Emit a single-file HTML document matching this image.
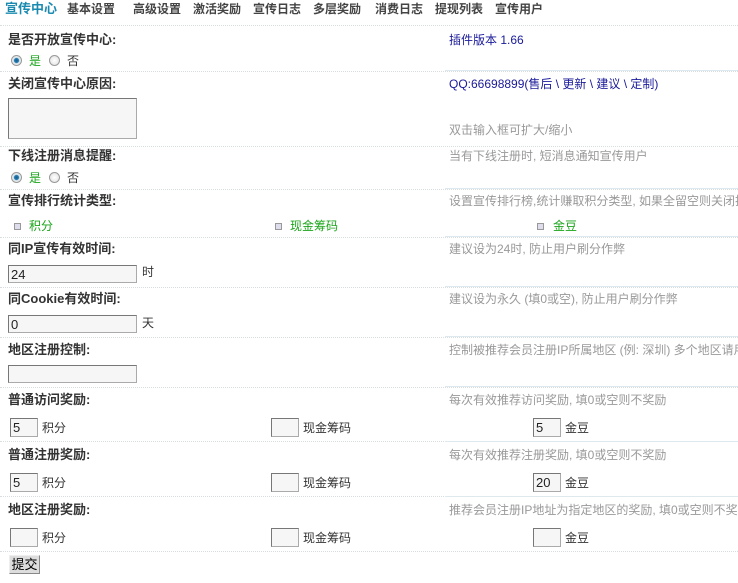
<!DOCTYPE html>
<html><head><meta charset="utf-8"><style>
*{margin:0;padding:0;box-sizing:border-box}
body{width:738px;height:583px;overflow:hidden;background:#fff;position:relative;font-family:"Liberation Sans","Noto Sans CJK SC","WenQuanYi Zen Hei",sans-serif;font-size:12px;color:#333}
.a{position:absolute;white-space:nowrap;line-height:14px}
.nav{font-weight:bold;color:#444;font-size:12px}
.lb{font-weight:bold;color:#333;font-size:13px;line-height:15px}
.n{color:#999}
.bl{color:#1a1a9a}
.g{color:#1aa51a}
.sep{position:absolute;left:0;width:738px;height:0;border-top:1px dotted #d8dde0}
.sepr{position:absolute;left:445px;width:293px;height:0;border-top:1px solid #dde9ef}
.in{position:absolute;background:#f6f6f6;border:1px solid #aaa;border-top-color:#777;border-left-color:#777;font-size:13px;padding:2px 0 0 2px;line-height:14px;color:#222}
.r{position:absolute;width:11px;height:11px;border-radius:50%;border:1px solid #999;background:radial-gradient(#fff,#ddd)}
.r.on{background:radial-gradient(#0d5e8e 0,#2a7cb0 35%,#cfe0ea 45%,#eee 70%)}
.cb{position:absolute;width:7px;height:7px;border:1px solid #999;background:#dde}
</style></head><body>
<div class="a nav" style="left:5px;top:2px;color:#1a8ab0;font-size:13px">宣传中心</div>
<div class="a nav" style="left:67px;top:2px">基本设置</div>
<div class="a nav" style="left:133px;top:2px">高级设置</div>
<div class="a nav" style="left:193px;top:2px">激活奖励</div>
<div class="a nav" style="left:253px;top:2px">宣传日志</div>
<div class="a nav" style="left:313px;top:2px">多层奖励</div>
<div class="a nav" style="left:375px;top:2px">消费日志</div>
<div class="a nav" style="left:435px;top:2px">提现列表</div>
<div class="a nav" style="left:495px;top:2px">宣传用户</div>
<div class="sep" style="top:25px"></div>

<div class="a lb" style="left:8px;top:32px">是否开放宣传中心:</div>
<div class="a bl" style="left:449px;top:33px">插件版本 1.66</div>
<div class="r on" style="left:11px;top:55px"></div><div class="a g" style="left:29px;top:54px">是</div>
<div class="r" style="left:49px;top:55px"></div><div class="a" style="left:67px;top:54px">否</div>
<div class="sep" style="top:71px"></div><div class="sepr" style="top:70px"></div>

<div class="a lb" style="left:8px;top:76px">关闭宣传中心原因:</div>
<div class="a bl" style="left:449px;top:77px">QQ:66698899(售后 \ 更新 \ 建议 \ 定制)</div>
<div class="in" style="left:8px;top:98px;width:129px;height:41px"></div>
<div class="a n" style="left:449px;top:123px">双击输入框可扩大/缩小</div>
<div class="sep" style="top:146px"></div>

<div class="a lb" style="left:8px;top:148px">下线注册消息提醒:</div>
<div class="a n" style="left:449px;top:149px">当有下线注册时, 短消息通知宣传用户</div>
<div class="r on" style="left:11px;top:172px"></div><div class="a g" style="left:29px;top:171px">是</div>
<div class="r" style="left:49px;top:172px"></div><div class="a" style="left:67px;top:171px">否</div>
<div class="sep" style="top:189px"></div><div class="sepr" style="top:188px"></div>

<div class="a lb" style="left:8px;top:193px">宣传排行统计类型:</div>
<div class="a n" style="left:449px;top:194px">设置宣传排行榜,统计赚取积分类型, 如果全留空则关闭排行</div>
<div class="cb" style="left:14px;top:223px"></div><div class="a g" style="left:29px;top:219px">积分</div>
<div class="cb" style="left:275px;top:223px"></div><div class="a g" style="left:290px;top:219px">现金筹码</div>
<div class="cb" style="left:537px;top:223px"></div><div class="a g" style="left:553px;top:219px">金豆</div>
<div class="sep" style="top:237px"></div><div class="sepr" style="top:236px"></div>

<div class="a lb" style="left:8px;top:241px">同IP宣传有效时间:</div>
<div class="a n" style="left:449px;top:242px">建议设为24时, 防止用户刷分作弊</div>
<div class="in" style="left:8px;top:265px;width:129px;height:18px">24</div>
<div class="a" style="left:142px;top:265px">时</div>
<div class="sep" style="top:287px"></div><div class="sepr" style="top:286px"></div>

<div class="a lb" style="left:8px;top:291px">同Cookie有效时间:</div>
<div class="a n" style="left:449px;top:292px">建议设为永久 (填0或空), 防止用户刷分作弊</div>
<div class="in" style="left:8px;top:315px;width:129px;height:18px">0</div>
<div class="a" style="left:142px;top:316px">天</div>
<div class="sep" style="top:337px"></div><div class="sepr" style="top:336px"></div>

<div class="a lb" style="left:8px;top:342px">地区注册控制:</div>
<div class="a n" style="left:449px;top:343px">控制被推荐会员注册IP所属地区 (例: 深圳) 多个地区请用逗号</div>
<div class="in" style="left:8px;top:365px;width:129px;height:18px"></div>
<div class="sep" style="top:387px"></div><div class="sepr" style="top:386px"></div>

<div class="a lb" style="left:8px;top:392px">普通访问奖励:</div>
<div class="a n" style="left:449px;top:393px">每次有效推荐访问奖励, 填0或空则不奖励</div>
<div class="in" style="left:10px;top:418px;width:28px;height:19px">5</div><div class="a" style="left:42px;top:421px">积分</div>
<div class="in" style="left:271px;top:418px;width:28px;height:19px"></div><div class="a" style="left:303px;top:421px">现金筹码</div>
<div class="in" style="left:533px;top:418px;width:28px;height:19px">5</div><div class="a" style="left:565px;top:421px">金豆</div>
<div class="sep" style="top:441px"></div><div class="sepr" style="top:441px"></div>

<div class="a lb" style="left:8px;top:447px">普通注册奖励:</div>
<div class="a n" style="left:449px;top:448px">每次有效推荐注册奖励, 填0或空则不奖励</div>
<div class="in" style="left:10px;top:473px;width:28px;height:19px">5</div><div class="a" style="left:42px;top:476px">积分</div>
<div class="in" style="left:271px;top:473px;width:28px;height:19px"></div><div class="a" style="left:303px;top:476px">现金筹码</div>
<div class="in" style="left:533px;top:473px;width:28px;height:19px">20</div><div class="a" style="left:565px;top:476px">金豆</div>
<div class="sep" style="top:496px"></div><div class="sepr" style="top:496px"></div>

<div class="a lb" style="left:8px;top:502px">地区注册奖励:</div>
<div class="a n" style="left:449px;top:503px">推荐会员注册IP地址为指定地区的奖励, 填0或空则不奖励</div>
<div class="in" style="left:10px;top:528px;width:28px;height:19px"></div><div class="a" style="left:42px;top:531px">积分</div>
<div class="in" style="left:271px;top:528px;width:28px;height:19px"></div><div class="a" style="left:303px;top:531px">现金筹码</div>
<div class="in" style="left:533px;top:528px;width:28px;height:19px"></div><div class="a" style="left:565px;top:531px">金豆</div>
<div class="sep" style="top:551px"></div>

<div class="a" style="left:9px;top:555px;width:31px;height:19px;border:1px solid #888;border-top-color:#eee;border-left-color:#eee;background:#ddd;font-size:13px;line-height:17px;text-align:center;color:#000">提交</div>
</body></html>
